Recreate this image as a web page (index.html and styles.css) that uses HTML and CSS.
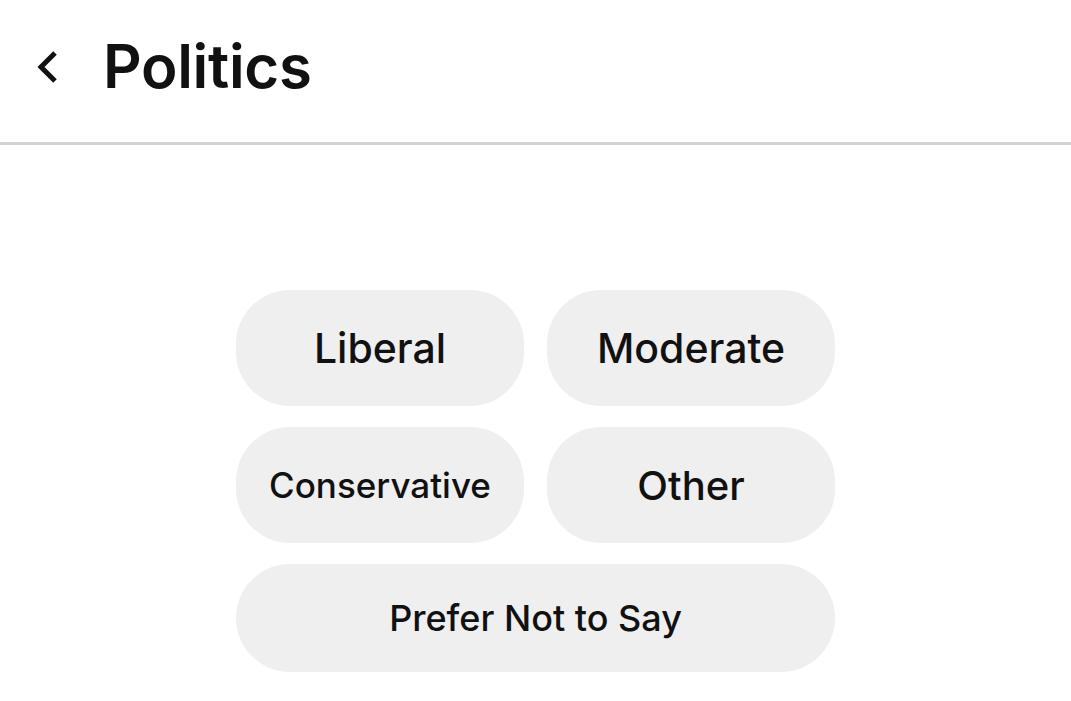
FILE: index.html
```html
<!DOCTYPE html>
<html lang="en">
<head>
<meta charset="utf-8">
<title>Politics</title>
<link rel="stylesheet" href="styles.css">
</head>
<body>
<header class="topbar">
  <button class="back" aria-label="Back">
    <svg width="24" height="36" viewBox="0 0 24 36"><path d="M19 4 L5 18 L19 32" fill="none" stroke="#111" stroke-width="5" stroke-linecap="butt" stroke-linejoin="miter"/></svg>
  </button>
  <h1 class="title">Politics</h1>
</header>
<main class="content">
  <div class="options">
    <button class="opt big">Liberal</button>
    <button class="opt big">Moderate</button>
    <button class="opt small">Conservative</button>
    <button class="opt mid">Other</button>
    <button class="opt small wide">Prefer Not to Say</button>
  </div>
</main>
</body>
</html>
```
FILE: styles.css
```css
* { box-sizing: border-box; }
html, body { margin: 0; padding: 0; background: #fff; }
body {
  font-family: Inter, "Noto Sans", "DejaVu Sans", sans-serif;
  color: #111;
  width: 1071px;
  height: 701px;
  overflow: hidden;
}
.topbar {
  height: 145px;
  display: flex;
  align-items: center;
  border-bottom: 3px solid #d2d2d2;
  padding-left: 36px;
  padding-bottom: 10px;
}
.back {
  background: none;
  border: 0;
  padding: 0;
  width: 24px;
  height: 36px;
  display: flex;
  margin-right: 43px;
  margin-top: 2px;
}
.title {
  margin: 0;
  font-size: 60px;
  font-weight: 600;
  letter-spacing: -0.3px;
  line-height: 1;
}
.content {
  display: flex;
  justify-content: center;
  padding-top: 145px;
}
.options {
  display: grid;
  grid-template-columns: 288px 288px;
  grid-template-rows: 116px 116px 108px;
  column-gap: 23px;
  row-gap: 21px;
}
.opt {
  border: 0;
  background: #efefef;
  border-radius: 54px;
  font-family: inherit;
  color: #111;
  font-weight: 500;
  display: flex;
  align-items: center;
  justify-content: center;
  padding: 0;
}
.big { font-size: 41px; }
.mid { font-size: 40px; }
.small { font-size: 35px; }
.wide { grid-column: 1 / 3; font-size: 36px; }
```
